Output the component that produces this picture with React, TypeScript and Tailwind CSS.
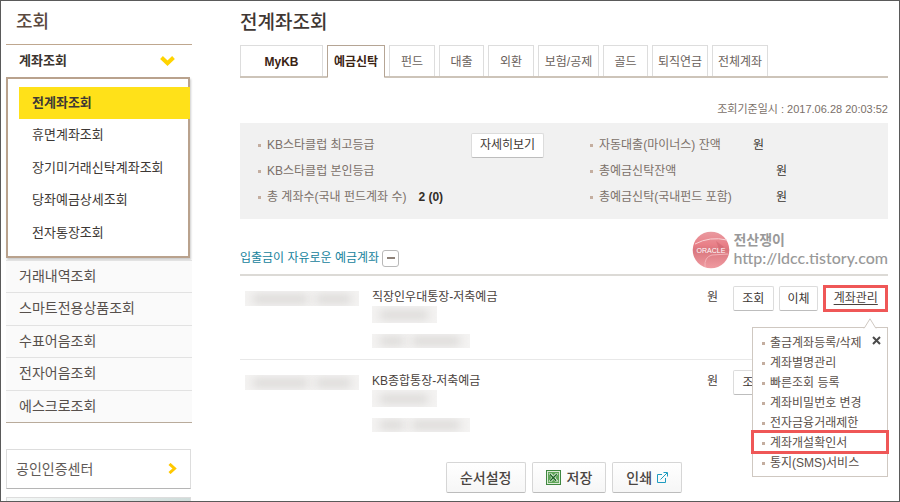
import type { ReactNode } from "react";
import { clsx } from "clsx";

const SUB_MENU = ["전계좌조회", "휴면계좌조회", "장기미거래신탁계좌조회", "당좌예금상세조회", "전자통장조회"];

const MENU = ["거래내역조회", "스마트전용상품조회", "수표어음조회", "전자어음조회", "에스크로조회"];

const TABS = [
  { label: "MyKB", width: "w-[83px]", bold: true },
  { label: "예금신탁", width: "w-[58px]", bold: true, active: true },
  { label: "펀드", width: "w-[46px]" },
  { label: "대출", width: "w-[45px]" },
  { label: "외환", width: "w-[46px]" },
  { label: "보험/공제", width: "w-[61px]" },
  { label: "골드", width: "w-[45px]" },
  { label: "퇴직연금", width: "w-[56px]" },
  { label: "전체계좌", width: "w-[56px]" },
];

const ACTIONS = [
  "출금계좌등록/삭제",
  "계좌별명관리",
  "빠른조회 등록",
  "계좌비밀번호 변경",
  "전자금융거래제한",
  "계좌개설확인서",
  "통지(SMS)서비스",
];

const MARKED_ACTION = "계좌개설확인서";

function Bullet() {
  return <span className="h-[3px] w-[3px] shrink-0 bg-[#c4aea0]" />;
}

/* Hidden account data */
function Masked({ className, bars }: { className: string; bars: string[] }) {
  return (
    <div className={clsx("flex items-center gap-2 overflow-hidden bg-[#f4f3f2] px-2", className)}>
      {bars.map((bar, i) => (
        <span key={i} className={clsx("h-2 bg-[#d8d6d4] blur-[5px]", bar)} />
      ))}
    </div>
  );
}

function SmallButton({ children, className }: { children: ReactNode; className?: string }) {
  return (
    <button
      type="button"
      className={clsx(
        "h-[25px] whitespace-nowrap rounded-[2px] border border-[#dcdcdc] border-b-[#bdbdbd] bg-white text-center leading-[22px] text-[#3c3632]",
        className,
      )}
    >
      {children}
    </button>
  );
}

function LargeButton({ children }: { children: ReactNode }) {
  return (
    <button
      type="button"
      className="flex h-[31px] items-center rounded-[2px] border border-[#d6d6d6] border-b-[#bcbcbc] bg-gradient-to-b from-white to-[#f6f6f6] px-[13px] text-sm font-medium text-[#4a4542]"
    >
      {children}
    </button>
  );
}

function Sidebar() {
  return (
    <aside className="w-[186px] shrink-0">
      <h2 className="flex h-11 items-center border-b border-[#bfa78f] pb-px pl-[10px] text-lg font-medium text-[#5b4a3f]">
        조회
      </h2>

      <a href="#accounts" className="flex h-8 items-center justify-between pl-[13px] pr-[17px] text-[13px] font-bold text-[#3b342f]">
        계좌조회
        <svg width="15" height="10" viewBox="0 0 15 10" fill="none" stroke="#ffd400" strokeWidth="4">
          <path d="M1.5 1.5 7.5 7.2 13.5 1.5" />
        </svg>
      </a>

      <ul className="mr-[2px] border-2 border-[#b9a28d] pb-[7px] pl-[11px] pt-2 text-[13px] leading-8 text-[#3d3835] shadow-[1px_2px_2px_#ccc]">
        {SUB_MENU.map((label, i) => (
          <li key={label} className={clsx("even:mb-px", i === 0 && "-mr-[2px] bg-[#ffe119] font-bold")}>
            <a href="#sub" className="block whitespace-nowrap pl-[13px]">{label}</a>
          </li>
        ))}
      </ul>

      <ul className="mt-[2px] border-b border-[#b9ab9b] bg-[#fafafa] text-sm text-[#57504c]">
        {MENU.map((label) => (
          <li key={label} className="border-t border-[#e2e2e2] even:pb-px">
            <a href="#menu" className="block whitespace-nowrap pl-[13px] leading-[31px]">{label}</a>
          </li>
        ))}
      </ul>

      <a
        href="#cert"
        className="mr-px mt-[26px] flex h-10 items-center justify-between border border-[#ddd] border-b-[#b5b5b5] pb-px pl-[9px] pr-[13px] text-sm text-[#5f5a57]"
      >
        공인인증센터
        <svg width="9" height="11" viewBox="0 0 9 11" fill="none" stroke="#ffc800" strokeWidth="3">
          <path d="M1.5 1 6.5 5.5 1.5 10" />
        </svg>
      </a>
      <div className="mr-px mt-2 h-10 border border-[#ddd] bg-gradient-to-r from-[#f5f8f7] to-[#cfdcda]" />
    </aside>
  );
}

function Tabs() {
  return (
    <nav className="flex gap-1 border-b-2 border-[#cdc4b9] text-xs text-[#6a615b]">
      {TABS.map((tab) => (
        <a
          key={tab.label}
          href="#tab"
          className={clsx(
            "flex items-center justify-center whitespace-nowrap border",
            tab.width,
            tab.bold && "font-bold text-[#3b2314]",
            tab.active ? "-mb-[2px] h-[33px] border-[#b5a595] border-b-white bg-white" : "h-[31px] border-[#ddd] border-b-0 pt-px",
          )}
        >
          {tab.label}
        </a>
      ))}
    </nav>
  );
}

function Summary() {
  return (
    <section className="mt-[5px] grid grid-cols-[332px_1fr] bg-[#f1f1f1] pb-[9px] pl-[18px] pt-[9px] leading-[26px] text-[#7b7069]">
      <ul>
        <li className="flex items-center gap-[6px]">
          <Bullet />
          KB스타클럽 최고등급
          <SmallButton className="ml-auto mr-[46px] w-[73px]">자세히보기</SmallButton>
        </li>
        <li className="flex items-center gap-[6px]">
          <Bullet />
          KB스타클럽 본인등급
        </li>
        <li className="flex items-center gap-[6px]">
          <Bullet />
          총 계좌수(국내 펀드계좌 수)
          <strong className="ml-[6px] text-[#332d29]">2 (0)</strong>
        </li>
      </ul>
      <ul>
        <li className="flex items-center gap-[6px]">
          <Bullet />
          <span className="w-[148px]">자동대출(마이너스) 잔액</span>
          <span className="text-[#3c3632]">원</span>
        </li>
        <li className="flex items-center gap-[6px]">
          <Bullet />
          <span className="w-[171px]">총예금신탁잔액</span>
          <span className="text-[#3c3632]">원</span>
        </li>
        <li className="flex items-center gap-[6px]">
          <Bullet />
          <span className="w-[171px]">총예금신탁(국내펀드 포함)</span>
          <span className="text-[#3c3632]">원</span>
        </li>
      </ul>
    </section>
  );
}

function Watermark() {
  return (
    <div className="absolute right-0 top-0 flex items-center gap-[3px] text-[#999]">
      <svg width="38" height="38" viewBox="0 0 38 38">
        <defs>
          <linearGradient id="ball" x1="0" y1="0" x2="0" y2="1">
            <stop offset="0" stopColor="#e99aa0" />
            <stop offset="0.35" stopColor="#e98088" />
            <stop offset="0.5" stopColor="#d9767e" />
            <stop offset="1" stopColor="#f09ba1" />
          </linearGradient>
        </defs>
        <circle cx="19" cy="19" r="18.3" fill="url(#ball)" />
        <path d="M3 13Q18 5 35 9" fill="none" stroke="#f8d3d6" strokeWidth="1" />
        <path d="M13 36Q12 26 20 24L36 23" fill="none" stroke="#f3b4b9" strokeWidth="1" />
        <path d="M24 10 32 16 27 18Z" fill="#c9626b" opacity="0.5" />
        <text x="19" y="21.5" textAnchor="middle" fontSize="7" fill="#fff" fontFamily="Liberation Sans, sans-serif">
          ORACLE
        </text>
      </svg>
      <div className="font-['Lato','Noto_Sans_CJK_KR',sans-serif]">
        <p className="text-sm font-bold leading-4">전산쟁이</p>
        <p className="text-base font-medium leading-5">http://ldcc.tistory.com</p>
      </div>
    </div>
  );
}

function AccountMenu() {
  return (
    <div className="absolute right-0 top-[42px] z-10 w-[136px] border border-[#cfc8c1] bg-white pb-[3px] pt-[5px]">
      <svg className="absolute -top-[10px] right-[10px]" width="14" height="11" viewBox="0 0 14 11">
        <path d="M1 10.5 7 .8 13 10.5" fill="#fff" stroke="#cfc8c1" />
        <path d="M1.5 10.5H12.5" stroke="#fff" />
      </svg>
      <button type="button" aria-label="닫기" className="absolute right-[6px] top-2 z-10">
        <svg width="9" height="9" viewBox="0 0 9 9" stroke="#4a4a4a" strokeWidth="2">
          <path d="M1 1 8 8M8 1 1 8" />
        </svg>
      </button>
      <ul>
        {ACTIONS.map((label) => (
          <li key={label} className="relative">
            <a href="#action" className="flex items-center gap-[5px] whitespace-nowrap pl-[9px] leading-5 text-[#5a4f49]">
              <Bullet />
              {label}
            </a>
            {label === MARKED_ACTION && (
              <span className="pointer-events-none absolute -inset-x-[2px] -bottom-px -top-[3px] border-[3px] border-[#ef5757]" />
            )}
          </li>
        ))}
      </ul>
    </div>
  );
}

function AccountRow({ name, open }: { name: string; open?: boolean }) {
  return (
    <tr className={clsx("align-top", open && "border-b border-[#e8e8e8]")}>
      <td className="w-[132px] pl-[5px] pt-[15px]">
        <Masked className="h-[15px] w-[114px]" bars={["w-14", "w-9"]} />
      </td>
      <td className="pb-[11px] pt-3 leading-[18px] text-[#4a423d]">
        {name}
        <Masked className="h-[17px] w-[65px]" bars={["w-12"]} />
        <Masked className="mt-[11px] h-[14px] w-[98px]" bars={["w-6", "w-12"]} />
      </td>
      <td className="w-[26px] pt-3 leading-[18px] text-[#4a423d]">원</td>
      <td className="w-[155px] pt-[9px]">
        <div className="relative flex h-[27px] items-center gap-[5px]">
          <SmallButton className="w-[41px]">조회</SmallButton>
          {open && (
            <>
              <SmallButton className="w-[40px]">이체</SmallButton>
              <a
                href="#manage"
                className="ml-auto h-[27px] w-[65px] border-[3px] border-[#ef5757] text-center leading-[21px] text-[#4a423d] underline underline-offset-2"
              >
                계좌관리
              </a>
              <AccountMenu />
            </>
          )}
        </div>
      </td>
    </tr>
  );
}

function ExcelIcon() {
  return (
    <svg className="mr-[6px]" width="15" height="15" viewBox="0 0 15 15">
      <rect x="0.5" y="0.5" width="14" height="14" fill="#dcebd6" stroke="#3f8740" />
      <rect x="2" y="2" width="11" height="11" fill="#5fa558" />
      <path d="M2.5 3.5H5.8L7.5 5.8 9.2 3.5H12.5L9.4 7.5 12.5 11.5H9.2L7.5 9.2 5.8 11.5H2.5L5.6 7.5Z" fill="#f1f8ee" />
      <path d="M4 4.3 10.2 10.8M10.8 4.3 4.2 10.8" stroke="#1d6424" strokeWidth="1.4" />
    </svg>
  );
}

export default function App() {
  return (
    <div className="flex h-screen gap-12 overflow-hidden border border-[#5a5a5a] bg-white pl-[5px] pr-[11px] font-['Liberation_Sans','Noto_Sans_CJK_KR',sans-serif] text-xs">
      <Sidebar />

      <main className="min-w-0 flex-1">
        <h1 className="flex h-11 items-center pb-px text-[19px] font-medium text-[#3f3733]">전계좌조회</h1>
        <Tabs />

        <p className="mt-[22px] text-right text-[11px] leading-[18px] text-[#7b7069]">조회기준일시 : 2017.06.28 20:03:52</p>
        <Summary />

        {/* Account list */}
        <section className="relative mt-3">
          <div className="flex h-[45px] items-center gap-[3px] border-b-2 border-[#dcdad6] pt-[11px] text-[#16829c]">
            <h2>입출금이 자유로운 예금계좌</h2>
            <button
              type="button"
              aria-label="접기"
              className="flex h-[17px] w-[17px] items-center justify-center rounded-[3px] border border-[#b9b9b9] bg-white"
            >
              <span className="h-[2px] w-2 bg-[#8d8178]" />
            </button>
          </div>
          <Watermark />

          <table className="w-full table-fixed border-collapse" aria-label="예금계좌">
            <tbody>
              <AccountRow name="직장인우대통장-저축예금" open />
              <AccountRow name="KB종합통장-저축예금" />
            </tbody>
          </table>
        </section>

        <div className="mt-[19px] flex justify-center gap-[6px]">
          <LargeButton>순서설정</LargeButton>
          <LargeButton>
            <ExcelIcon />
            저장
          </LargeButton>
          <LargeButton>
            인쇄
            <svg className="ml-[5px]" width="11" height="11" viewBox="0 0 11 11" fill="none" stroke="#1f9cc0">
              <path d="M5 2.5H.5V10.5H8.5V6M3.5 7.5 10 1M6.5.5H10.5V4.5" />
            </svg>
          </LargeButton>
        </div>
      </main>
    </div>
  );
}
